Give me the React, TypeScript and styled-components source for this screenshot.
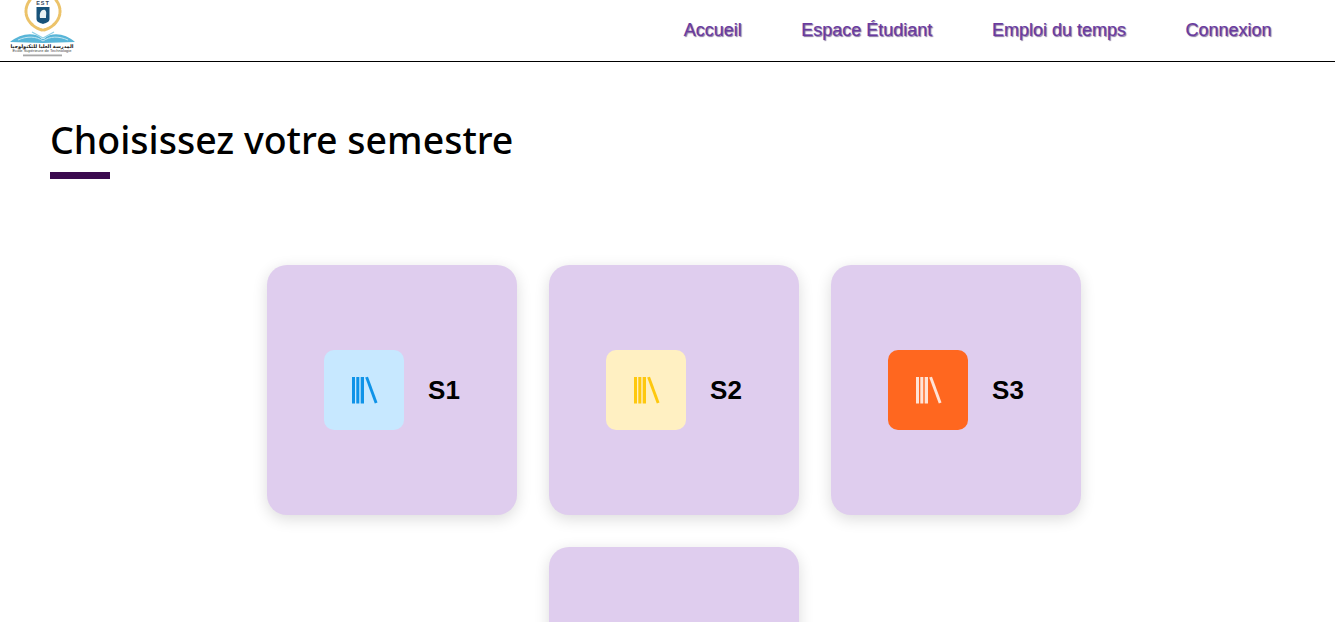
import { createGlobalStyle, styled } from "styled-components";

const GlobalStyle = createGlobalStyle`
  html, body {
    margin: 0;
    padding: 0;
    height: 100%;
    overflow: hidden;
    background: #fff;
    font-family: "Liberation Sans", Arial, sans-serif;
  }
`;

const Header = styled.header`
  height: 61px;
  display: flex;
  align-items: center;
  justify-content: space-between;
  padding: 0 63.5px 0 10px;
  border-bottom: 1px solid #000;
  overflow: hidden;
`;

const Logo = styled.svg`
  width: 66px;
  height: 61px;
  display: block;
`;

const Nav = styled.nav`
  display: flex;
  gap: 59.5px;
  padding-bottom: 1px;
`;

const NavLink = styled.a`
  font-size: 18px;
  line-height: 21px;
  color: #693a9f;
  text-shadow: 1px 1px 1px rgba(50, 20, 90, 0.6);
  -webkit-text-stroke: 0.2px #693a9f;
  text-decoration: none;
`;

const Main = styled.main`
  padding: 54px 50px 0;
`;

const Title = styled.h1`
  margin: 0;
  font-family: "Noto Sans", "Open Sans", sans-serif;
  font-size: 37.5px;
  line-height: 48px;
  font-weight: 500;
  color: #000;
`;

const TitleBar = styled.div`
  width: 60px;
  height: 7px;
  margin-top: 8px;
  background: #3b0a4f;
`;

const Grid = styled.div`
  width: 814px;
  margin: 86px 0 0 217px;
  display: flex;
  flex-wrap: wrap;
  justify-content: center;
  gap: 32px;
`;

const Card = styled.div`
  width: 250px;
  height: 250px;
  box-sizing: border-box;
  display: flex;
  align-items: center;
  justify-content: center;
  gap: 24px;
  border-radius: 20px;
  background: #dfcdee;
  box-shadow: 0 4px 15px rgba(0, 0, 0, 0.14);
`;

const IconTile = styled.div<{ $bg: string; $fg: string }>`
  width: 80px;
  height: 80px;
  display: flex;
  align-items: center;
  justify-content: center;
  border-radius: 10px;
  background: ${(p) => p.$bg};
  color: ${(p) => p.$fg};
`;

const CardLabel = styled.span`
  font-size: 26px;
  font-weight: 700;
  color: #000;
`;

const Books = () => (
  <svg width="28" height="28" viewBox="0 0 28 28" fill="currentColor">
    <rect x="2" y="1" width="3" height="26.5" />
    <rect x="6.3" y="1" width="3" height="26.5" />
    <rect x="10.7" y="1" width="3.3" height="26.5" />
    <polygon points="15.2,1.6 18,0.8 27.5,26.4 24.8,27.4" />
  </svg>
);

const semesters = [
  { name: "S1", bg: "#c7e8ff", fg: "#0f93e8" },
  { name: "S2", bg: "#fff0c2", fg: "#fec80e" },
  { name: "S3", bg: "#ff671f", fg: "#ffe3d6" },
];

const links = ["Accueil", "Espace Étudiant", "Emploi du temps", "Connexion"];

export default function App() {
  return (
    <>
      <GlobalStyle />
      <Header>
        <Logo viewBox="0 0 66 61">
          <g fill="none" stroke="#ecc36a" strokeWidth="3" strokeLinecap="round" strokeDasharray="2.5 1.2">
            <path d="M20 0 C11 12 18 26 32 30" />
            <path d="M46 0 C55 12 48 26 34 30" />
          </g>
          <text x="33" y="5" textAnchor="middle" fontSize="5.5" fontWeight="700" letterSpacing="1" fill="#33465c">EST</text>
          <path d="M26.5 7 H39.5 V19 C39.5 22 36 23 33 24 C30 23 26.5 22 26.5 19 Z" fill="#17527a" />
          <path d="M30 18 C29 12 32 9 35 10 C37 12 36 14 36 18 Z" fill="#e8f2f4" />
          <path d="M0 42 C10 34 24 31 32 39 L34 39 C42 31 56 34 65 42 L33 43 Z" fill="#58b5d8" />
          <path d="M8 40 C17 36 26 36 33 41 C40 36 49 36 58 40" fill="none" stroke="#c4e6f2" strokeWidth="1" />
          <path d="M22 32 L33 38 L44 32" fill="none" stroke="#8fcfe5" strokeWidth="1.4" />
          <text x="32" y="47.5" textAnchor="middle" fontFamily="'DejaVu Sans', sans-serif" fontSize="5" fontWeight="700" textLength="63" lengthAdjust="spacingAndGlyphs" fill="#111">المدرسة العليا للتكنولوجيا</text>
          <text x="32" y="52" textAnchor="middle" fontFamily="'Liberation Sans', sans-serif" fontSize="3.8" textLength="59" lengthAdjust="spacingAndGlyphs" fill="#444">Ecole Supérieure de Technologie</text>
          <rect x="13" y="54.5" width="39" height="1.8" fill="#a8a8a8" />
        </Logo>
        <Nav>
          {links.map((label) => (
            <NavLink key={label}>{label}</NavLink>
          ))}
        </Nav>
      </Header>
      <Main>
        <Title>Choisissez votre semestre</Title>
        <TitleBar />
        <Grid>
          {semesters.map((s) => (
            <Card key={s.name}>
              <IconTile $bg={s.bg} $fg={s.fg}>
                <Books />
              </IconTile>
              <CardLabel>{s.name}</CardLabel>
            </Card>
          ))}
          <Card />
        </Grid>
      </Main>
    </>
  );
}
